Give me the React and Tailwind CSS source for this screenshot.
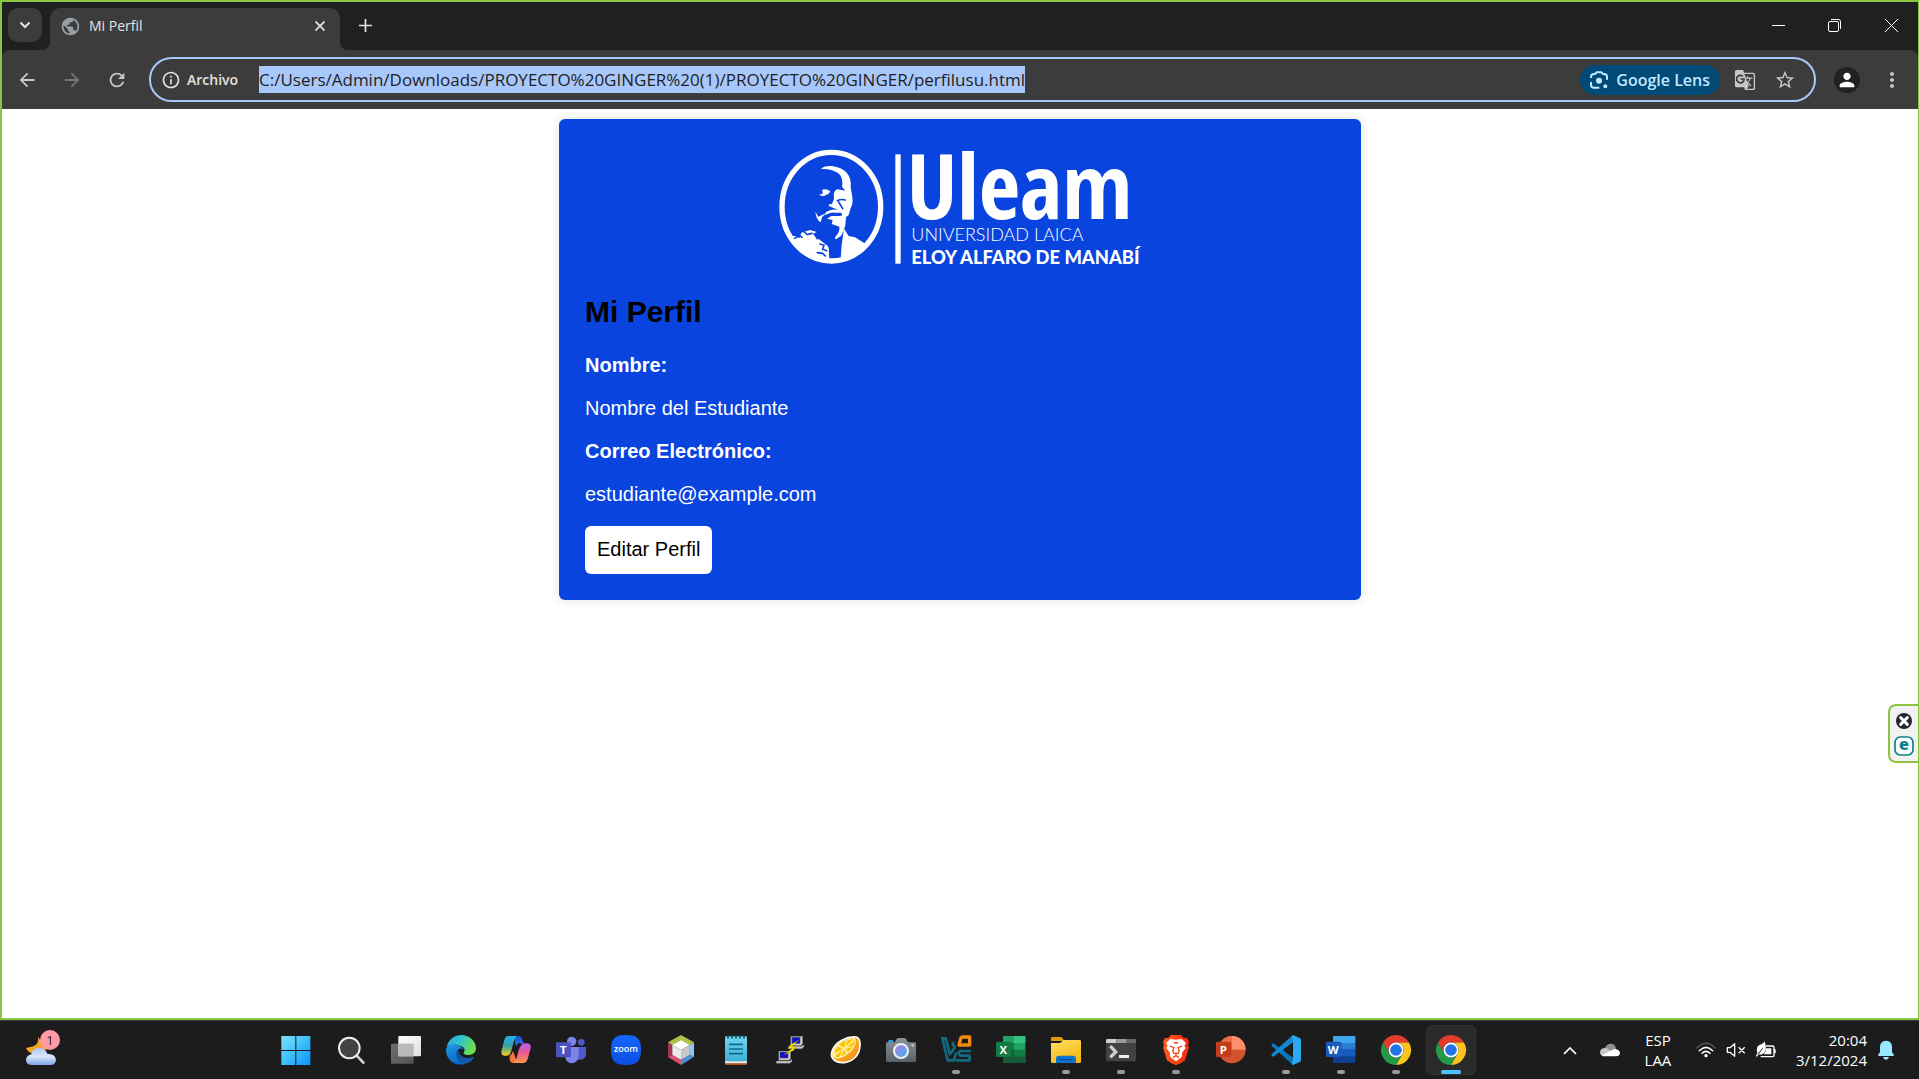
import React from "react";
import {
  MdPublic,
  MdArrowBack,
  MdArrowForward,
  MdRefresh,
  MdInfoOutline,
  MdGTranslate,
  MdStarBorder,
  MdPerson,
  MdMoreVert,
} from "react-icons/md";

const uiFont = "font-['Segoe_UI','Open_Sans',sans-serif]";

/* ---------- University logo ---------- */

function UleamLogo() {
  return (
    <svg viewBox="0 45 1200 375" className="h-[125px] w-[400px] max-w-full overflow-visible" role="img" aria-label="Uleam">
      <ellipse cx="214" cy="230" rx="148" ry="163" fill="none" stroke="#fff" strokeWidth="16" />
      <g fill="#fff">
        <path d="M183 117Q190 107 215 108Q245 112 260 128Q275 145 272 172L277 200Q280 220 272 235L266 255L258 262L256 285Q252 305 243 318L228 328Q222 325 228 318Q240 305 238 290L215 282L218 270L201 266L214 258L240 258L247 256L244 248L225 248Q210 246 195 256L198 246Q215 235 235 240L226 236L207 228Q203 221 216 222L222 206Q218 184 232 178L256 182L246 170Q250 150 240 134Q222 116 183 117Z" />
        <path d="M177 195L189 190L186 180Q198 174 211 184L206 191L190 199Z" />
        <path d="M166 245L175 260L199 249L186 262L182 277Q168 268 166 245Z" />
        <path d="M92 318L105 318L118 325L124 308L150 300L170 306L158 312L180 330L206 350L208 388Q150 388 105 340Z" />
        <path d="M252 296L266 318L285 322L322 345Q285 388 242 388L245 345Z" />
      </g>
      <g fill="none" stroke="#0944de" strokeWidth="5" strokeLinecap="round">
        <path d="M232 212Q244 206 256 210M236 216L248 236" />
        <path d="M104 325L118 316L126 322M133 306L142 314L156 310M166 316L172 326L182 322M180 342L192 346L188 358L200 362M172 368L188 370L196 378M204 340L208 352" />
      </g>
      <rect x="406" y="73" width="16" height="328" fill="#fff" />
      <text x="440" y="268" fontSize="270" fontWeight="800" fill="#fff" fontFamily="'Open Sans Condensed','Roboto Condensed',Roboto,sans-serif">
        Uleam
      </text>
      <text x="454" y="332" fontSize="54" fontWeight="300" fill="#fff" fontFamily="Lato,sans-serif">
        UNIVERSIDAD LAICA
      </text>
      <text x="454" y="401" fontSize="55" fontWeight="900" fill="#fff" fontFamily="Lato,sans-serif">
        ELOY ALFARO DE MANABÍ
      </text>
    </svg>
  );
}

/* ---------- Taskbar icons, drawn on a 90 unit grid ---------- */

function Icon({ children }) {
  return (
    <svg viewBox="0 0 90 90" className="size-[30px] overflow-visible" aria-hidden="true">
      {children}
    </svg>
  );
}

function Gradient({ id, from, to, mid, x2 = 1, y2 = 1 }) {
  return (
    <linearGradient id={id} x1="0" y1="0" x2={x2} y2={y2}>
      <stop offset="0" stopColor={from} />
      {mid && <stop offset="0.5" stopColor={mid} />}
      <stop offset="1" stopColor={to} />
    </linearGradient>
  );
}

const StartIcon = () => (
  <Icon>
    <defs>
      <linearGradient id="start" gradientUnits="userSpaceOnUse" x1="0" y1="0" x2="90" y2="90">
        <stop offset="0" stopColor="#84e4fb" />
        <stop offset="0.5" stopColor="#3dc0fb" />
        <stop offset="1" stopColor="#0a93fb" />
      </linearGradient>
    </defs>
    <path fill="url(#start)" d="M1 3h42v42H1zM46 3h42v42H46zM1 48h42v42H1zM46 48h42v42H46z" />
  </Icon>
);

const SearchIcon = () => (
  <Icon>
    <path d="M62 62L82 83" stroke="#d5d5d5" strokeWidth="8" strokeLinecap="round" />
    <circle cx="40" cy="39" r="31" fill="#434343" stroke="#efefef" strokeWidth="6" />
  </Icon>
);

const TaskViewIcon = () => (
  <Icon>
    <defs>
      <Gradient id="tv" from="#ffffff" to="#dedede" />
      <Gradient id="tv2" from="#6e6e6e" to="#555555" />
    </defs>
    <rect x="0" y="26" width="68" height="60" rx="3" fill="url(#tv2)" />
    <rect x="22" y="3" width="68" height="61" rx="3" fill="url(#tv)" />
    <rect x="22" y="26" width="46" height="38" fill="#b9b9b9" />
  </Icon>
);

const EdgeIcon = () => (
  <Icon>
    <defs>
      <Gradient id="e1" from="#2aa5dd" mid="#32c3d0" to="#6be04a" y2={0.4} />
      <Gradient id="e2" from="#1d9be3" to="#0b67cb" x2={0.3} />
      <Gradient id="e3" from="#0f4a97" to="#1660b4" />
    </defs>
    <path fill="url(#e1)" d="M2 36C8 12 26 0 46 0C72 0 90 20 90 40C90 54 78 61 66 60C56 60 50 56 54 51C58 46 56 37 46 34C30 26 10 28 2 36Z" />
    <path fill="url(#e2)" d="M0 42C4 28 20 26 34 31C46 35 54 41 52 44C46 36 34 42 32 54C30 70 42 82 58 86C30 96 -2 76 0 42Z" />
    <path fill="url(#e3)" d="M38 40C26 52 30 74 52 86C68 88 80 76 84 67C84 64 80 66 78 67C60 74 38 64 38 46Z" />
  </Icon>
);

const CopilotIcon = () => (
  <Icon>
    <defs>
      <Gradient id="c1" from="#1fb4ee" mid="#32a0a4" to="#f7cf1d" x2={0} />
      <Gradient id="c2" from="#b25cf0" mid="#ee5a92" to="#fb9a45" x2={0} />
      <Gradient id="c3" from="#1a4ad0" to="#2b8af0" x2={0} />
    </defs>
    <path fill="url(#c3)" d="M40 3H56Q62 4 64 14L67 24H56Q48 24 45 36Z" />
    <path fill="url(#c1)" d="M20 3H48Q42 6 39 18L30 50Q27 62 16 62H10Q-2 60 2 46L10 14Q13 4 20 3Z" />
    <path fill="#f2793b" d="M26 62Q33 58 36 48L46 74Q43 82 34 83Q28 83 26 74Z" />
    <path fill="url(#c2)" d="M56 25H78Q92 27 89 40L80 72Q77 83 68 84H32Q42 82 46 72L53 46Q56 34 64 28Z" />
  </Icon>
);

const TeamsIcon = () => (
  <Icon>
    <circle cx="47" cy="19" r="14" fill="#7b83eb" />
    <circle cx="76" cy="22" r="10" fill="#5059c9" />
    <path fill="#5059c9" d="M62 36H90V58Q88 74 74 74H62Z" />
    <path fill="#7b83eb" d="M28 36H68V60Q66 84 47 85Q28 84 28 62Z" />
    <rect x="0" y="22" width="45" height="45" rx="4" fill="#4b53bc" />
    <text x="22" y="57" fontSize="34" fontWeight="700" fill="#fff" textAnchor="middle" fontFamily="'Open Sans',sans-serif">T</text>
  </Icon>
);

const ZoomIcon = () => (
  <Icon>
    <defs><Gradient id="zm" from="#1666ff" to="#0b4fe0" x2={0} /></defs>
    <path fill="url(#zm)" d="M45 0C80 0 90 12 90 45C90 78 78 90 45 90C12 90 0 78 0 45C0 12 10 0 45 0Z" />
    <text x="45" y="51" fontSize="27" fontWeight="600" fill="#fff" textAnchor="middle" fontFamily="'Open Sans',sans-serif">zoom</text>
  </Icon>
);

const NetBeansIcon = () => (
  <Icon>
    <path fill="#aebf4a" d="M45 0L84 22L70 32L45 18L20 32L6 22Z" />
    <path fill="#a3324f" d="M6 22L20 32V58L6 66Z" />
    <path fill="#d9506a" d="M6 66L20 58L45 74V90Z" />
    <path fill="#4a8fd2" d="M84 66L70 58L45 74V90Z" />
    <path fill="#8ec3ea" d="M84 22L70 32V58L84 66Z" />
    <path fill="#fff" d="M45 16L71 30L45 45L19 30Z" />
    <path fill="#e8e8ea" d="M19 30L45 45V74L19 59Z" />
    <path fill="#c6c8cc" d="M71 30L45 45V74L71 59Z" />
  </Icon>
);

const NotepadIcon = () => (
  <Icon>
    <defs><Gradient id="np" from="#70d5ee" to="#3fb0d4" x2={0} /></defs>
    <rect x="12" y="76" width="66" height="14" rx="3" fill="#a8501c" />
    <rect x="12" y="72" width="66" height="13" rx="2" fill="#e8e8e8" />
    <path fill="url(#np)" d="M12 6Q12 4 15 4H75Q78 4 78 7V79H12Z" />
    <path stroke="#0b6a8c" strokeWidth="5" d="M24 28H66M24 42H66M24 56H66" />
    <path stroke="#0f4f69" strokeWidth="5" strokeLinecap="round" d="M21 3V9M33 3V9M45 3V9M57 3V9M69 3V9" />
  </Icon>
);

const PuttyIcon = () => (
  <Icon>
    {[[42, 2], [6, 46]].map(([x, y]) => (
      <g key={x} transform={`translate(${x} ${y})`}>
        <path fill="#cfcfcf" stroke="#333" strokeWidth="1" d="M2 2H34L38 0V24L34 30H2Z" />
        <rect x="6" y="5" width="24" height="18" fill="#0b0bd8" stroke="#555" strokeWidth="2" />
        <path fill="#c4c4c4" stroke="#777" strokeWidth="1" d="M-4 32H36L42 27V33L36 39H-6Z" />
      </g>
    ))}
    <path fill="#ffee00" stroke="#6b6400" strokeWidth="1" d="M70 14L42 30L38 42L50 40L22 60L54 46L58 34L46 35Z" />
  </Icon>
);

const CitrusIcon = () => (
  <Icon>
    <defs><Gradient id="ct" from="#ffd21a" to="#f5821f" /></defs>
    <path fill="url(#ct)" stroke="#fff" strokeWidth="5" d="M4 46C14 20 46 4 76 6C90 10 92 44 74 66C54 86 24 88 8 74C0 66 0 56 4 46Z" />
    <path fill="#fff4b8" d="M8 46C18 24 46 8 72 10C80 26 66 48 46 60C30 70 14 74 7 66C4 60 5 52 8 46Z" />
    <path fill="#ffc400" d="M40 38L24 30Q34 19 46 16ZM43 36L50 15L68 13ZM46 38L71 16Q73 24 68 32ZM44 41L66 35Q58 46 50 52ZM40 43L46 55Q38 62 30 64ZM36 43L26 65Q14 68 11 64ZM35 40L10 58Q10 46 20 34Z" />
  </Icon>
);

const CameraIcon = () => (
  <Icon>
    <defs>
      <Gradient id="cm" from="#8b949b" to="#596168" x2={0} />
      <Gradient id="cl" from="#c07de8" to="#28b3ea" />
    </defs>
    <rect x="7" y="15" width="15" height="10" rx="3" fill="#1ba3e8" />
    <path fill="url(#cm)" d="M4 22H26L32 12Q34 9 38 9H54Q58 9 60 12L66 22H86Q90 22 90 26V77Q90 81 86 81H4Q0 81 0 77V26Q0 22 4 22Z" />
    <circle cx="45" cy="48" r="21" fill="url(#cl)" stroke="#f2f2f2" strokeWidth="6" />
    <path stroke="#e6e6e6" strokeWidth="2" d="M75 31H84M80 27V36" />
  </Icon>
);

const VirtualBoxIcon = () => (
  <Icon>
    <g fill="none" strokeWidth="8" strokeLinejoin="round">
      <path stroke="#126a82" d="M36 34V20M0 10H14L27 58L40 40V30M4 10L20 76H38L46 52" />
      <path stroke="#f28a0f" strokeWidth="10" d="M60 8Q61 6 64 6H86V30H54Z" />
      <path stroke="#126a82" d="M90 48H58Q54 48 54 54Q54 62 60 62H84Q86 62 86 66V76H44" />
    </g>
  </Icon>
);

const ExcelIcon = () => (
  <Icon>
    <rect x="21" y="3" width="67" height="81" rx="3" fill="#21a366" />
    <path fill="#33c481" d="M54 3H85Q88 3 88 6V24H54Z" />
    <path fill="#107c41" d="M54 44H88V64H54ZM21 24H54V44H21Z" />
    <path fill="#185c37" d="M21 44H54V64H88V81Q88 84 85 84H24Q21 84 21 81Z" />
    <rect x="0" y="20" width="46" height="46" rx="4" fill="#107c41" />
    <text x="22" y="56" fontSize="34" fontWeight="700" fill="#fff" textAnchor="middle" fontFamily="'Open Sans',sans-serif">X</text>
  </Icon>
);

const ExplorerIcon = () => (
  <Icon>
    <defs><Gradient id="fx" from="#ffdf6b" to="#f8b90f" x2={0.5} /></defs>
    <path fill="#dd9c0a" d="M0 10Q0 6 4 6H28Q32 6 35 10L40 18H0Z" />
    <path fill="url(#fx)" d="M0 24H26Q30 24 34 18L38 15H86Q90 15 90 19V80Q90 84 86 84H4Q0 84 0 80Z" />
    <path fill="#0e73c9" d="M15 84V70Q15 62 24 62H66Q75 62 75 70V84Z" />
    <path stroke="#084b8c" strokeWidth="3" d="M24 74H66" />
  </Icon>
);

const TerminalIcon = () => (
  <Icon>
    <path fill="#424242" d="M0 22H90V75Q90 79 86 79H4Q0 79 0 75Z" />
    <path fill="#cfcfcf" d="M4 12H31V24H0V16Q0 12 4 12Z" />
    <path fill="#9a9a9a" d="M31 12H60V24H31Z" />
    <path fill="#6b6b6b" d="M60 12H86Q90 12 90 16V24H60Z" />
    <path fill="none" stroke="#cfcfcf" strokeWidth="10" d="M13 33L29 51L13 67" />
    <rect x="39" y="60" width="30" height="9" fill="#eee" />
  </Icon>
);

const BraveIcon = () => (
  <Icon>
    <defs><Gradient id="br" from="#ff5a1f" to="#f5290c" y2={0} /></defs>
    <path fill="url(#br)" d="M30 0H60L68 9L78 9L84 21L81 30L84 38L72 76Q60 86 45 91Q30 86 18 76L6 38L9 30L6 21L12 9L22 9Z" />
    <path fill="#fff" d="M45 14L62 12L75 24L70 32L74 40L64 52L62 66L45 79L28 66L26 52L16 40L20 32L15 24L28 12Z" />
    <path fill="none" stroke="#f8420f" strokeWidth="4" d="M26 33L39 38L35 48L39 55H51L55 48L51 38L64 33M45 56V62L36 68M45 62L54 68M38 22L45 25L52 22" />
  </Icon>
);

const PowerPointIcon = () => (
  <Icon>
    <circle cx="48" cy="44" r="41" fill="#d35230" />
    <path fill="#ff8f6b" d="M48 3A41 41 0 0 1 89 44H48Z" />
    <path fill="#ed6c47" d="M48 3A41 41 0 0 0 7 44H48Z" />
    <rect x="0" y="20" width="46" height="46" rx="4" fill="#c43e1c" />
    <text x="22" y="56" fontSize="34" fontWeight="700" fill="#fff" textAnchor="middle" fontFamily="'Open Sans',sans-serif">P</text>
  </Icon>
);

const VsCodeIcon = () => (
  <Icon>
    <path fill="#0a74bd" d="M7 24L66 68V90L3 34Q-1 30 3 27Z" />
    <path fill="#1389d3" d="M7 65L66 22V0L3 56Q-1 60 3 63Z" />
    <path fill="#2aa8f2" d="M66 0L86 9Q90 11 90 15V75Q90 79 86 81L66 90L62 86L66 74V16L62 4Z" />
  </Icon>
);

const WordIcon = () => (
  <Icon>
    <rect x="21" y="3" width="67" height="81" rx="3" fill="#103f91" />
    <path fill="#41a5ee" d="M24 3H85Q88 3 88 6V24H21V6Q21 3 24 3Z" />
    <path fill="#2b7cd3" d="M21 24H88V44H21Z" />
    <path fill="#185abd" d="M21 44H88V64H21Z" />
    <rect x="0" y="20" width="46" height="46" rx="4" fill="#185abd" />
    <text x="22" y="56" fontSize="34" fontWeight="700" fill="#fff" textAnchor="middle" fontFamily="'Open Sans',sans-serif">W</text>
  </Icon>
);

const chromeBlade = "M-39 -22.5A45 45 0 0 1 39 -22.5L0 -22.5A22.5 22.5 0 0 0 -19.5 11.25Z";
const ChromeIcon = () => (
  <Icon>
    <g transform="translate(45 45)">
      <path d={chromeBlade} fill="#e33b2e" />
      <path d={chromeBlade} fill="#fcc31e" transform="rotate(120)" />
      <path d={chromeBlade} fill="#239a48" transform="rotate(240)" />
      <circle r="22.5" fill="#fff" />
      <circle r="17.5" fill="#1f74e8" />
    </g>
  </Icon>
);

const apps = [
  { name: "Inicio", Glyph: StartIcon },
  { name: "Buscar", Glyph: SearchIcon },
  { name: "Vista de tareas", Glyph: TaskViewIcon },
  { name: "Microsoft Edge", Glyph: EdgeIcon },
  { name: "Copilot", Glyph: CopilotIcon },
  { name: "Microsoft Teams", Glyph: TeamsIcon },
  { name: "Zoom", Glyph: ZoomIcon },
  { name: "NetBeans", Glyph: NetBeansIcon },
  { name: "Bloc de notas", Glyph: NotepadIcon },
  { name: "PuTTY", Glyph: PuttyIcon },
  { name: "Citra", Glyph: CitrusIcon },
  { name: "Cámara", Glyph: CameraIcon },
  { name: "VirtualBox", Glyph: VirtualBoxIcon, open: true },
  { name: "Excel", Glyph: ExcelIcon },
  { name: "Explorador de archivos", Glyph: ExplorerIcon, open: true },
  { name: "Terminal", Glyph: TerminalIcon, open: true },
  { name: "Brave", Glyph: BraveIcon, open: true },
  { name: "PowerPoint", Glyph: PowerPointIcon },
  { name: "Visual Studio Code", Glyph: VsCodeIcon, open: true },
  { name: "Word", Glyph: WordIcon, open: true },
  { name: "Chrome", Glyph: ChromeIcon, open: true },
  { name: "Chrome, Mi Perfil", Glyph: ChromeIcon, active: true },
];

/* ---------- Browser chrome ---------- */

function TabStrip() {
  return (
    <div className="flex h-12 shrink-0 items-start bg-[#1f2120] pt-1.5 pl-1.5 text-[#e3e3e3]">
      <button aria-label="Buscar pestañas" className="flex h-[34px] w-[34px] items-center justify-center rounded-[10px] bg-[#3c3c3c]">
        <svg viewBox="0 0 12 8" className="h-2 w-3" fill="none" stroke="currentColor" strokeWidth="2">
          <path d="M1.500 1.500L6 6L10.500 1.500" />
        </svg>
      </button>
      <div className="flex h-[42px] items-end">
        <svg viewBox="0 0 8 8" className="size-2 text-[#3c3c3c]"><path fill="currentColor" d="M8 0V8H0A8 8 0 0 0 8 0Z" /></svg>
        <div className="flex h-full w-[290px] items-center rounded-t-[10px] bg-[#3c3c3c] pr-2.5 pb-1.5 pl-2.5">
          <MdPublic className="size-[21px] text-[#9aa0a6]" />
          <span className="ml-2 flex-1 text-sm">Mi Perfil</span>
          <button aria-label="Cerrar pestaña" className="flex size-5 items-center justify-center">
            <svg viewBox="0 0 10 10" className="size-2.5" stroke="currentColor" strokeWidth="1.700"><path d="M0.500 0.500L9.500 9.500M9.500 0.500L0.500 9.500" /></svg>
          </button>
        </div>
        <svg viewBox="0 0 8 8" className="size-2 text-[#3c3c3c]"><path fill="currentColor" d="M0 0V8H8A8 8 0 0 1 0 0Z" /></svg>
      </div>
      <button aria-label="Nueva pestaña" className="ml-[5px] flex h-[34px] w-6 items-center justify-center">
        <svg viewBox="0 0 13 13" className="size-[13px]" stroke="currentColor" strokeWidth="1.700"><path d="M6.500 0V13M0 6.500H13" /></svg>
      </button>
      <div className="ml-auto flex h-[34px] items-center pr-5 text-white">
        <button aria-label="Minimizar" className="flex w-14 justify-center">
          <svg viewBox="0 0 13 13" className="size-[13px]" stroke="currentColor"><path d="M0 6.500H13" /></svg>
        </button>
        <button aria-label="Restaurar" className="flex w-14 justify-center">
          <svg viewBox="0 0 13 13" className="size-[13px]" fill="none" stroke="currentColor">
            <rect x="0.500" y="2.500" width="10" height="10" rx="1.500" />
            <path d="M3 0.500H10.500Q12.500 0.500 12.500 2.500V10" />
          </svg>
        </button>
        <button aria-label="Cerrar" className="flex w-9 justify-end">
          <svg viewBox="0 0 13 13" className="size-[13px]" stroke="currentColor"><path d="M0 0L13 13M13 0L0 13" /></svg>
        </button>
      </div>
    </div>
  );
}

function Toolbar() {
  return (
    <div className="shrink-0 bg-[#1f2120]">
      <div className="flex h-[59px] items-center rounded-t-lg bg-[#3c3c3c] px-3.5 text-[#c7c7c7]">
        <button aria-label="Atrás" className="flex w-[45px]"><MdArrowBack className="size-[22px]" /></button>
        <button aria-label="Adelante" className="flex w-[45px] text-[#757575]"><MdArrowForward className="size-[22px]" /></button>
        <button aria-label="Volver a cargar" className="flex w-[43px]"><MdRefresh className="size-[22px]" /></button>
        <div className="flex h-[45px] min-w-0 flex-1 items-center rounded-full border-2 border-[#a8c7fa] pr-[18px] pl-2.5">
          <MdInfoOutline className="size-5 shrink-0 text-[#e3e3e3]" />
          <span className="ml-1.5 w-[72px] shrink-0 text-sm font-semibold text-[#e3e3e3]">Archivo</span>
          <div className="flex min-w-0 flex-1">
            <input
              aria-label="Dirección"
              readOnly
              className="field-sizing-content h-[27px] min-w-0 bg-[#a8c7fa] text-[17px] text-[#1f1f1f] outline-none"
              value="C:/Users/Admin/Downloads/PROYECTO%20GINGER%20(1)/PROYECTO%20GINGER/perfilusu.html"
            />
          </div>
          <button className="flex h-[30px] shrink-0 items-center gap-2 rounded-full bg-[#004a77] px-2.5 text-base font-semibold text-[#c2e7ff]">
            <svg viewBox="0 0 54 54" className="size-[18px]" fill="none" stroke="currentColor" strokeWidth="6">
              <path d="M3 21V18Q3 9 12 9H15L20 4H34L39 9H42Q51 9 51 18V26M3 33V41Q3 50 12 50H28" />
              <circle cx="27" cy="29" r="9" fill="currentColor" stroke="none" />
              <circle cx="46" cy="46" r="6" fill="currentColor" stroke="none" />
            </svg>
            Google Lens
          </button>
          <button aria-label="Traducir" className="ml-3.5 shrink-0"><MdGTranslate className="size-[22px]" /></button>
          <button aria-label="Agregar a favoritos" className="ml-[18px] shrink-0"><MdStarBorder className="size-[22px]" /></button>
        </div>
        <button aria-label="Perfil" className="ml-[18px] flex size-[26px] items-center justify-center rounded-full bg-[#1f2120] text-white">
          <MdPerson className="size-[22px]" />
        </button>
        <button aria-label="Menú" className="ml-5"><MdMoreVert className="size-6" /></button>
      </div>
    </div>
  );
}

/* ---------- Page ---------- */

function ProfilePage() {
  return (
    <main className="flex-1 bg-white pt-2.5 font-['Liberation_Sans',Arial,sans-serif] text-xl leading-[23px]">
      <section className="mx-auto w-full max-w-[802px] rounded-md bg-[#0944de] p-[26px] text-white shadow-[0_0_12px_rgba(0,0,0,0.12)]">
        <div className="flex justify-center">
          <UleamLogo />
        </div>
        <h2 className="my-[25px] text-3xl leading-[34px] font-bold text-black">Mi Perfil</h2>
        <div className="flex flex-col items-start gap-5">
          <p className="font-bold">Nombre:</p>
          <p>Nombre del Estudiante</p>
          <p className="font-bold">Correo Electrónico:</p>
          <p>estudiante@example.com</p>
          <button className="h-12 rounded-md bg-white px-3 pb-0.5 text-black">Editar Perfil</button>
        </div>
      </section>
    </main>
  );
}

function SideWidget() {
  return (
    <aside className="absolute top-[702px] right-0 flex w-[30px] flex-col items-center gap-[7px] rounded-l-lg border-2 border-r-0 border-[#8bc53f] bg-[#f2f2f2] pt-[7px] pb-[5px]">
      <button aria-label="Cerrar panel" className="flex">
        <svg viewBox="0 0 48 48" className="size-4">
          <circle cx="24" cy="24" r="24" fill="#22262b" />
          <path d="M14 14L34 34M34 14L14 34" stroke="#fff" strokeWidth="9" strokeLinecap="round" />
        </svg>
      </button>
      <button aria-label="Abrir panel" className="flex">
        <svg viewBox="0 0 60 60" className="size-5 overflow-visible">
          <rect x="3" y="3" width="54" height="54" rx="16" fill="#fff" stroke="#0b7f8a" strokeWidth="5" />
          <text x="30" y="43" fontSize="48" fontWeight="800" textAnchor="middle" fill="#0b7f8a" fontFamily="'Open Sans',sans-serif">e</text>
        </svg>
      </button>
    </aside>
  );
}

/* ---------- Taskbar ---------- */

function Taskbar() {
  return (
    <footer className="flex h-[59px] shrink-0 items-center border-t border-[#3a3a3a] bg-[#1c1c1c] text-[15px] text-white">
      <button aria-label="Clima" className="w-[268px] shrink-0 pb-1 pl-6">
        <svg viewBox="0 0 108 114" className="h-[38px] w-9">
          <defs>
            <Gradient id="wc" from="#a9c4f3" mid="#dbe7fb" to="#7ea4e6" x2={0} />
          </defs>
          <path fill="#f5a623" d="M42 24Q46 44 28 52L6 57Q12 74 34 74L70 60Z" />
          <path fill="url(#wc)" d="M22 108Q6 106 6 92Q7 80 22 76Q26 56 46 56Q64 56 70 74Q94 74 96 92Q95 107 80 108Z" />
          <circle cx="78" cy="33" r="30" fill="#ff99a4" />
          <text x="78" y="47" fontSize="39" fill="#1c1c1c" textAnchor="middle" fontFamily="'Open Sans',sans-serif">1</text>
        </svg>
      </button>
      <nav className="flex shrink-0">
        {apps.map(({ name, Glyph, open, active }) => (
          <button key={name} aria-label={name} className="flex w-[55px] justify-center">
            <span
              className={
                active
                  ? "flex h-[50px] w-[50px] flex-col items-center justify-between rounded-md border border-[#343434] bg-[#2a2a2a] pt-[9px]"
                  : "flex h-[50px] w-[50px] flex-col items-center justify-between pt-2.5"
              }
            >
              <Glyph />
              {active && <span className="h-1 w-5 rounded-full bg-[#4cc2ff]" />}
              {open && <span className="mb-px h-1 w-2 rounded-full bg-[#9a9a9a]" />}
            </span>
          </button>
        ))}
      </nav>
      <div className="ml-auto flex shrink-0 items-center pr-[25px]">
        <button aria-label="Mostrar iconos ocultos">
          <svg viewBox="0 0 14 9" className="h-[9px] w-3.5" fill="none" stroke="currentColor" strokeWidth="1.700"><path d="M1 8L7 2L13 8" /></svg>
        </button>
        <button aria-label="OneDrive" className="ml-[23px]">
          <svg viewBox="0 0 60 42" className="h-3.5 w-5">
            <path fill="#8f8f8f" d="M14 16Q20 1 34 2Q46 4 48 17L30 30Z" />
            <path fill="#c6c6c6" d="M12 40Q0 38 0 27Q2 15 15 15Q24 15 34 26Z" />
            <path fill="#fff" d="M10 40Q4 38 8 36L42 18Q58 18 60 30Q59 40 48 40Z" />
          </svg>
        </button>
        <button className="ml-6 w-7 leading-5">ESP LAA</button>
        <div className="ml-6 flex items-center gap-2.5">
          <svg viewBox="0 0 60 48" className="h-4 w-5" fill="none" strokeWidth="4.500" strokeLinecap="round">
            <path stroke="#555" d="M3 18Q30 -10 57 18" />
            <path stroke="#fff" d="M10 26Q30 6 50 26M18 34Q30 22 42 34" />
            <circle cx="30" cy="41" r="5" fill="#fff" />
          </svg>
          <svg viewBox="0 0 60 48" className="h-4 w-5" fill="none" stroke="#fff" strokeWidth="4">
            <path strokeLinejoin="round" d="M4 17H12L26 5V43L12 31H4ZM38 16L56 34M56 16L38 34" />
          </svg>
          <svg viewBox="0 0 60 54" className="h-[18px] w-5" fill="none" stroke="#fff" strokeWidth="4">
            <path d="M30 15H50Q54 15 54 19V43Q54 47 50 47H14M57 25V37" />
            <path fill="#fff" stroke="none" d="M4 36Q-2 14 16 10Q24 8 25 0Q34 20 26 34Q18 44 8 40L2 48L0 44Z" />
            <path fill="#fff" stroke="none" d="M30 22H46V40H22Q30 34 30 22Z" />
            <path stroke="#1c1c1c" strokeWidth="3" d="M6 40L20 22" />
          </svg>
        </div>
        <button className="ml-5 text-right leading-5">
          <span className="block">20:04</span>
          <span className="block">3/12/2024</span>
        </button>
        <button aria-label="Notificaciones" className="ml-[11px]">
          <svg viewBox="0 0 48 60" className="h-5 w-4" fill="#98e8ff">
            <path d="M24 2Q42 3 42 22V36L48 45Q48 48 44 48H4Q0 48 0 45L6 36V22Q6 3 24 2ZM15 51H33Q31 59 24 59Q17 59 15 51Z" />
          </svg>
        </button>
      </div>
    </footer>
  );
}

export default function App() {
  return (
    <div className={`flex h-screen flex-col ${uiFont}`}>
      <div className="relative flex min-h-0 flex-1 flex-col overflow-hidden border-2 border-r border-[#8bc53f] bg-white">
        <TabStrip />
        <Toolbar />
        <ProfilePage />
        <SideWidget />
      </div>
      <Taskbar />
    </div>
  );
}
